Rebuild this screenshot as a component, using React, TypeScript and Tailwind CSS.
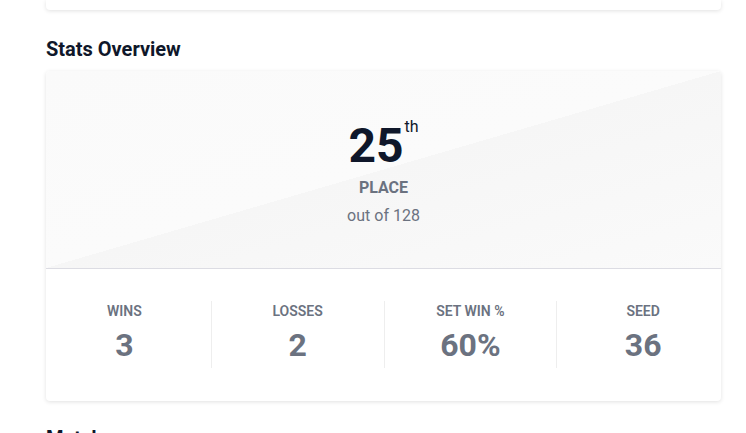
const stats = [
  { label: 'WINS', value: '3' },
  { label: 'LOSSES', value: '2' },
  { label: 'SET WIN %', value: '60%' },
  { label: 'SEED', value: '36' },
];

export default function App() {
  return (
    <div className="min-h-screen bg-white font-['Roboto',sans-serif] pl-[46px] pr-[25px]">
      {/* previous card, scrolled off the top */}
      <div className="h-[10px] bg-white rounded-b-[4px] shadow-[0_1px_4px_rgba(0,0,0,0.12)]" />

      <h2 className="mt-[25px] mb-2 text-xl leading-7 font-bold text-[#0f172a]">Stats Overview</h2>

      <div className="bg-white rounded-[4px] shadow-[0_1px_4px_rgba(0,0,0,0.12)] overflow-hidden">
        {/* placement */}
        <div className="flex flex-col items-center pt-[51px] pb-[40px] border-b border-[#dcdce3] bg-[linear-gradient(to_bottom_right,#fafafa_0%,#fbfbfb_50%,#f6f6f6_50%,#fafafa_100%)]">
          <div className="text-5xl leading-none font-bold text-[#0f172a]">
            25
            <span className="relative -top-[30px] ml-px text-base font-normal">th</span>
          </div>
          <div className="mt-1.5 text-base leading-6 font-bold text-[#6b7280]">PLACE</div>
          <div className="mt-1 text-base leading-6 text-[#6b7280]">out of 128</div>
        </div>

        {/* numbers */}
        <div className="-mx-2 grid grid-cols-4 pt-8 pb-[33px]">
          {stats.map((s, i) => (
            <div
              key={s.label}
              className={`flex flex-col items-center h-[67px] ${i > 0 ? 'border-l border-[#eeeeee]' : ''}`}
            >
              <div className="text-sm leading-5 font-semibold text-[#6b7280]">{s.label}</div>
              <div className="mt-1 text-[32px] leading-10 font-bold text-[#6b7280]">{s.value}</div>
            </div>
          ))}
        </div>
      </div>

      <h2 className="mt-[23px] text-xl leading-7 font-bold text-[#0f172a]">Matches</h2>
    </div>
  );
}
